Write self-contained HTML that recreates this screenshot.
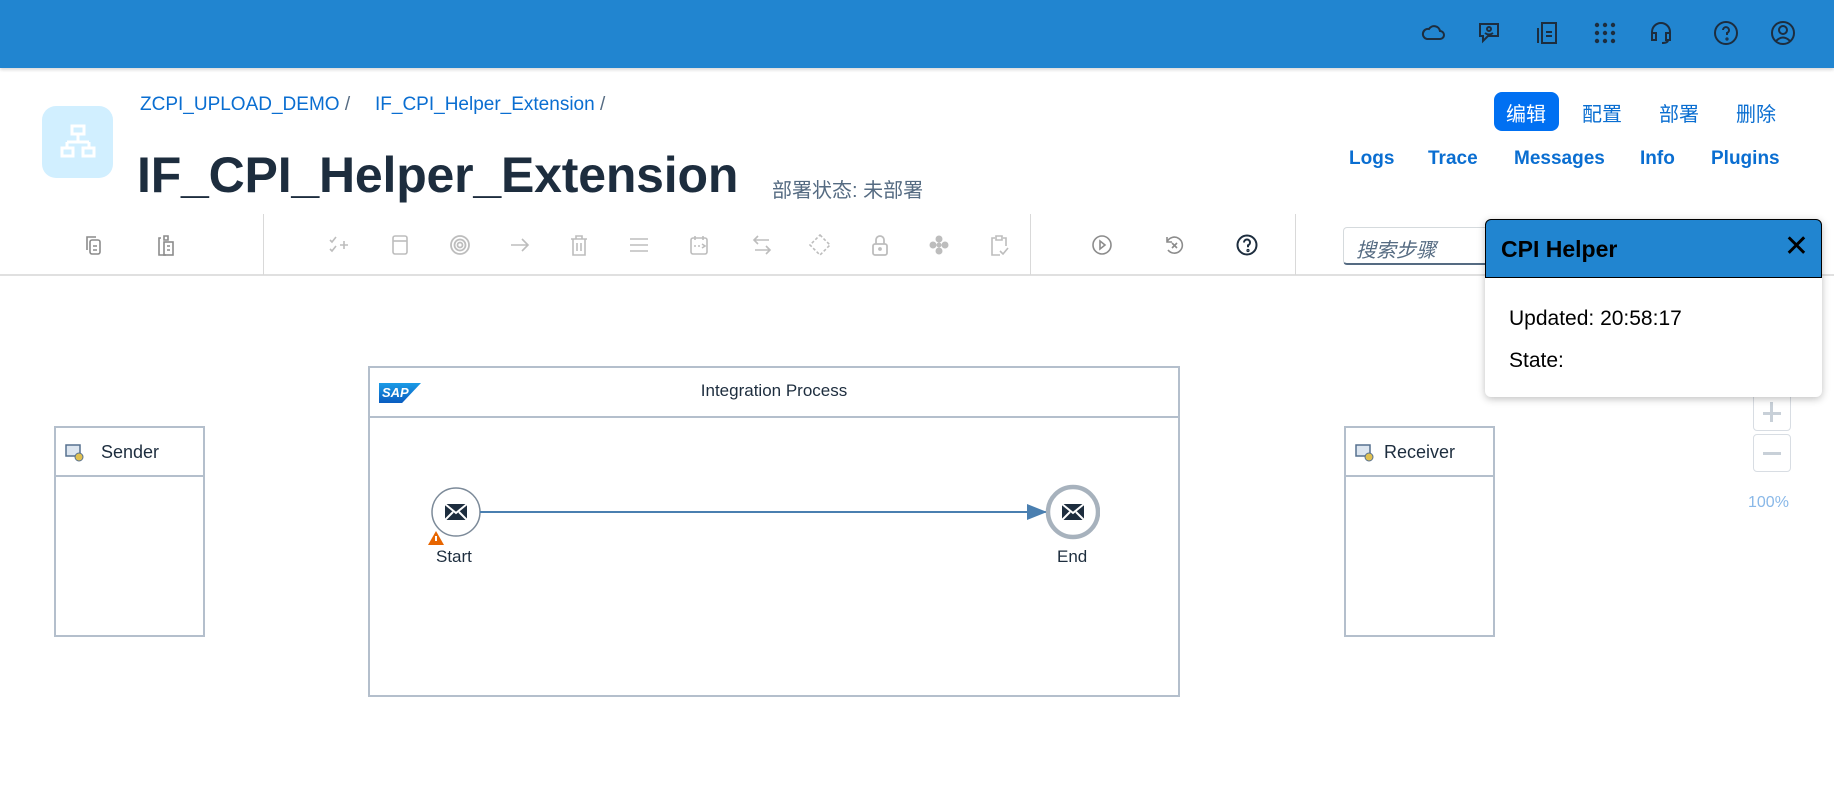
<!DOCTYPE html>
<html><head><meta charset="utf-8"><style>
*{margin:0;padding:0;box-sizing:border-box}
body{width:1834px;height:787px;overflow:hidden;background:#fff;font-family:"Liberation Sans","Noto Sans CJK SC",sans-serif;position:relative}
.abs{position:absolute}
.top{left:0;top:0;width:1834px;height:68px;background:#2185d0;box-shadow:0 2px 3px rgba(0,0,0,.15)}
.ti{position:absolute;top:20px;width:26px;height:26px}
.bc{color:#0a6ed1;font-size:19px;top:94px}
.link{color:#0a6ed1;font-size:19px;font-weight:bold;top:148px}
.cn{color:#0a6ed1;font-size:20px;top:98px}
.tb{position:absolute;top:234px;width:22px;height:22px}
.sep{position:absolute;top:214px;width:1px;height:61px;background:#d9d9d9}
.box{position:absolute;border:2px solid #b4bfcc;background:#fff}
.hd{position:absolute;left:0;right:0;border-bottom:2px solid #b4bfcc}
</style></head><body>
<div class="abs top"></div>
<svg class="ti" style="left:1420px" viewBox="0 0 26 26" fill="none" stroke="#1d2d3e" stroke-width="2"><path d="M7 19h13a4 4 0 0 0 0-8 6 6 0 0 0-11-2 5 5 0 0 0-2 10z"/></svg>
<svg class="ti" style="left:1476px" viewBox="0 0 26 26" fill="none" stroke="#1d2d3e" stroke-width="2"><path d="M4 4h18v12h-10l-5 5v-5h-3z"/><circle cx="13" cy="9" r="2"/><path d="M9 13q4 3 8 0"/></svg>
<svg class="ti" style="left:1534px" viewBox="0 0 26 26" fill="none" stroke="#1d2d3e" stroke-width="2"><path d="M8 3h14v20h-14zM4 8v15M12 12h6M12 16h6"/></svg>
<svg class="ti" style="left:1592px" viewBox="0 0 26 26" fill="#1d2d3e"><circle cx="5" cy="5" r="2.2"/><circle cx="13" cy="5" r="2.2"/><circle cx="21" cy="5" r="2.2"/><circle cx="5" cy="13" r="2.2"/><circle cx="13" cy="13" r="2.2"/><circle cx="21" cy="13" r="2.2"/><circle cx="5" cy="21" r="2.2"/><circle cx="13" cy="21" r="2.2"/><circle cx="21" cy="21" r="2.2"/></svg>
<svg class="ti" style="left:1648px" viewBox="0 0 26 26" fill="none" stroke="#1d2d3e" stroke-width="2"><path d="M4 16v-4a9 9 0 0 1 18 0v4M4 13h4v7h-4zM18 13h4v7h-4zM20 20q0 3-6 3"/></svg>
<svg class="ti" style="left:1713px" viewBox="0 0 26 26" fill="none" stroke="#1d2d3e" stroke-width="2"><circle cx="13" cy="13" r="11"/><path d="M10 10a3 3 0 1 1 4 3v2"/><circle cx="14" cy="19" r=".6"/></svg>
<svg class="ti" style="left:1770px" viewBox="0 0 26 26" fill="none" stroke="#1d2d3e" stroke-width="2"><circle cx="13" cy="13" r="11"/><circle cx="13" cy="10" r="4"/><path d="M6 21q7-7 14 0"/></svg>

<div class="abs" style="left:42px;top:106px;width:71px;height:72px;border-radius:14px;background:#d1efff"></div>
<svg class="abs" style="left:60px;top:124px" width="36" height="36" viewBox="0 0 36 36" fill="none" stroke="#fff" stroke-width="3"><rect x="12" y="2" width="12" height="8"/><path d="M18 10v8M7 18h22M7 18v6M29 18v6"/><rect x="2" y="24" width="11" height="8"/><rect x="23" y="24" width="11" height="8"/></svg>
<div class="abs bc" style="left:140px">ZCPI_UPLOAD_DEMO <span style="color:#556b82">/</span></div>
<div class="abs bc" style="left:375px">IF_CPI_Helper_Extension <span style="color:#556b82">/</span></div>
<div class="abs" style="left:137px;top:146px;font-size:50px;font-weight:bold;color:#1d2d3e;letter-spacing:-0.2px">IF_CPI_Helper_Extension</div>
<div class="abs" style="left:772px;top:174px;font-size:20px;color:#556b82">部署状态: 未部署</div>

<div class="abs" style="left:1494px;top:92px;width:65px;height:39px;border-radius:8px;background:#0070f2"></div>
<div class="abs cn" style="left:1506px;color:#fff">编辑</div>
<div class="abs cn" style="left:1582px">配置</div>
<div class="abs cn" style="left:1659px">部署</div>
<div class="abs cn" style="left:1736px">删除</div>
<div class="abs link" style="left:1349px">Logs</div>
<div class="abs link" style="left:1428px">Trace</div>
<div class="abs link" style="left:1514px">Messages</div>
<div class="abs link" style="left:1640px">Info</div>
<div class="abs link" style="left:1711px">Plugins</div>

<div class="abs" style="left:0;top:274px;width:1834px;height:2px;background:#e0e0e0"></div>
<div class="sep" style="left:263px"></div><div class="sep" style="left:1030px"></div><div class="sep" style="left:1295px"></div>
<div class="abs" style="left:0;top:0">
<svg class="tb" style="left:83px" viewBox="0 0 22 22" fill="none" stroke="#8c8c8c" stroke-width="1.6"><path d="M4 16V3h9"/><rect x="7" y="6" width="10" height="14" rx="2"/><path d="M10 12h4M10 16h4"/></svg>
<svg class="tb" style="left:155px" viewBox="0 0 22 22" fill="none" stroke="#8c8c8c" stroke-width="1.6"><path d="M6 4h-2v17h7M9 2h4v4h-4z"/><rect x="9" y="8" width="9" height="13"/><path d="M12 12h3M12 16h3"/></svg>
<svg class="tb" style="left:328px" viewBox="0 0 22 22" fill="none" stroke="#bdbdbd" stroke-width="1.6"><path d="M2 6l2 2 4-5M2 15l2 2 4-5M12 11h8M16 7v8"/></svg>
<svg class="tb" style="left:389px" viewBox="0 0 22 22" fill="none" stroke="#bdbdbd" stroke-width="1.6"><rect x="4" y="2" width="14" height="18" rx="2"/><path d="M4 7h14"/></svg>
<svg class="tb" style="left:449px" viewBox="0 0 22 22" fill="none" stroke="#bdbdbd" stroke-width="1.8"><circle cx="11" cy="11" r="9"/><circle cx="11" cy="11" r="5.5"/><circle cx="11" cy="11" r="2.5"/></svg>
<svg class="tb" style="left:509px" viewBox="0 0 22 22" fill="none" stroke="#bdbdbd" stroke-width="1.6"><path d="M2 11h17M13 5l6 6-6 6"/></svg>
<svg class="tb" style="left:568px" viewBox="0 0 22 22" fill="none" stroke="#bdbdbd" stroke-width="1.6"><path d="M3 5h16M8 5V2h6v3M5 5v16h12V5M9 9v8M13 9v8"/></svg>
<svg class="tb" style="left:628px" viewBox="0 0 22 22" fill="none" stroke="#bdbdbd" stroke-width="1.6"><path d="M2 5h18M2 11h18M2 17h18"/></svg>
<svg class="tb" style="left:688px" viewBox="0 0 22 22" fill="none" stroke="#bdbdbd" stroke-width="1.6"><rect x="3" y="4" width="16" height="16" rx="2"/><path d="M7 2v4M15 2v4M6 12h2M10 12h2M14 10l3 2-3 2"/></svg>
<svg class="tb" style="left:751px" viewBox="0 0 22 22" fill="none" stroke="#bdbdbd" stroke-width="1.6"><path d="M18 6H3M7 2L3 6l4 4M4 16h15M15 12l4 4-4 4"/></svg>
<svg class="tb" style="left:809px" viewBox="0 0 22 22" fill="none" stroke="#bdbdbd" stroke-width="1.6" stroke-dasharray="3 2"><path d="M11 1l10 10-10 10L1 11z"/></svg>
<svg class="tb" style="left:869px" viewBox="0 0 22 22" fill="none" stroke="#bdbdbd" stroke-width="1.8"><rect x="4" y="10" width="14" height="11" rx="2"/><path d="M7 10V6a4 4 0 0 1 8 0v4"/><circle cx="11" cy="15" r="1"/></svg>
<svg class="tb" style="left:928px" viewBox="0 0 22 22" fill="#bdbdbd"><circle cx="11" cy="5" r="3.5"/><circle cx="5" cy="11" r="3.5"/><circle cx="17" cy="11" r="3.5"/><circle cx="11" cy="17" r="3.5"/><circle cx="11" cy="11" r="2.5"/></svg>
<svg class="tb" style="left:988px" viewBox="0 0 22 22" fill="none" stroke="#bdbdbd" stroke-width="1.6"><path d="M7 4H4v17h8M8 2h6v4H8zM15 4h3v8M12 17l3 3 5-6"/></svg>
<svg class="tb" style="left:1091px" viewBox="0 0 22 22" fill="none" stroke="#8c8c8c" stroke-width="1.6"><circle cx="11" cy="11" r="9"/><path d="M9 7l5 4-5 4z"/></svg>
<svg class="tb" style="left:1163px" viewBox="0 0 22 22" fill="none" stroke="#8c8c8c" stroke-width="1.6"><path d="M4 8a8 8 0 1 1 1 8M4 3v5h5M9 9l5 5M14 9l-5 5"/></svg>
<svg class="tb" style="left:1236px" viewBox="0 0 22 22" fill="none" stroke="#1d2d3e" stroke-width="2"><circle cx="11" cy="11" r="9.5"/><path d="M8 8.5a3 3 0 1 1 4 2.8v2"/><circle cx="12" cy="16.5" r=".6"/></svg>
</div>
<div class="abs" style="left:1343px;top:227px;width:160px;height:38px;border:1px solid #d5dadd;border-bottom:2px solid #556b82;border-radius:4px;padding:6px 12px;font-size:20px;font-style:italic;color:#556b82">搜索步骤</div>

<div class="abs" style="left:1753px;top:393px;width:38px;height:38px;border:1px solid #d8dde3;border-radius:4px"></div>
<div class="abs" style="left:1753px;top:434px;width:38px;height:38px;border:1px solid #d8dde3;border-radius:4px"></div>
<div class="abs" style="left:1763px;top:412px;width:18px;height:3px;background:#c8d0d8"></div>
<div class="abs" style="left:1770px;top:402px;width:3px;height:20px;background:#c8d0d8"></div>
<div class="abs" style="left:1763px;top:452px;width:18px;height:3px;background:#c8d0d8"></div>
<div class="abs" style="left:1748px;top:494px;font-size:16px;color:#89b8e8">100%</div>

<div class="abs" style="left:1485px;top:219px;width:337px;height:178px;background:#fff;border-radius:6px;box-shadow:0 2px 8px rgba(0,0,0,.25)">
<div style="height:59px;background:#2185d0;border:1px solid #000;border-radius:6px 6px 0 0;padding:16px 15px;font-size:23px;font-weight:bold;color:#000">CPI Helper<span style="position:absolute;right:13px;top:10px;font-size:30px;font-weight:normal">✕</span></div>
<div style="padding:20px 24px 0;font-size:21px;color:#000;line-height:42px">Updated: 20:58:17<br>State:</div>
</div>

<div class="box" style="left:54px;top:426px;width:151px;height:211px"><div class="hd" style="top:0;height:49px"></div>
<svg class="abs" style="left:9px;top:15px" width="20" height="20" viewBox="0 0 20 20"><rect x="1" y="2" width="14" height="11" fill="#dde6f0" stroke="#56708f" stroke-width="1.5"/><circle cx="14" cy="14" r="4" fill="#e0c050" stroke="#56708f"/></svg>
<div class="abs" style="left:45px;top:14px;font-size:18px;color:#1d2d3e">Sender</div></div>
<div class="box" style="left:1344px;top:426px;width:151px;height:211px"><div class="hd" style="top:0;height:49px"></div>
<svg class="abs" style="left:9px;top:15px" width="20" height="20" viewBox="0 0 20 20"><rect x="1" y="2" width="14" height="11" fill="#dde6f0" stroke="#56708f" stroke-width="1.5"/><circle cx="14" cy="14" r="4" fill="#e0c050" stroke="#56708f"/></svg>
<div class="abs" style="left:38px;top:14px;font-size:18px;color:#1d2d3e">Receiver</div></div>
<div class="box" style="left:368px;top:366px;width:812px;height:331px"><div class="hd" style="top:0;height:50px"></div>
<div class="abs" style="left:9px;top:15px;width:42px;height:20px;background:linear-gradient(#1a9be6,#0a5cc0);clip-path:polygon(0 0,100% 0,55% 100%,0 100%);color:#fff;font-size:13px;font-weight:bold;font-style:italic;padding:2px 3px">SAP</div>
<div class="abs" style="left:0;right:0;top:13px;text-align:center;font-size:17px;color:#1d2d3e">Integration Process</div></div>
<svg class="abs" style="left:420px;top:480px" width="680" height="70">
<circle cx="36" cy="32" r="24" fill="#fff" stroke="#7c8a99" stroke-width="1.5"/>
<rect x="25" y="24" width="22" height="16" fill="#1d2d3e"/><path d="M25 24l11 9 11-9M25 40l8-8M47 40l-8-8" stroke="#fff" stroke-width="2" fill="none"/>
<line x1="60" y1="32" x2="627" y2="32" stroke="#4a7fb0" stroke-width="2"/>
<path d="M607 24l20 8-20 8z" fill="#4a7fb0"/>
<circle cx="653" cy="32" r="25" fill="#fff" stroke="#a7b2bd" stroke-width="4.5"/>
<rect x="642" y="24" width="22" height="16" fill="#1d2d3e"/><path d="M642 24l11 9 11-9M642 40l8-8M664 40l-8-8" stroke="#fff" stroke-width="2" fill="none"/>
<path d="M8 65l8-14 8 14z" fill="#e76500"/><path d="M16 56v5" stroke="#fff" stroke-width="2"/>
</svg>
<div class="abs" style="left:436px;top:547px;font-size:17px;color:#1d2d3e">Start</div>
<div class="abs" style="left:1057px;top:547px;font-size:17px;color:#1d2d3e">End</div>
</body></html>
